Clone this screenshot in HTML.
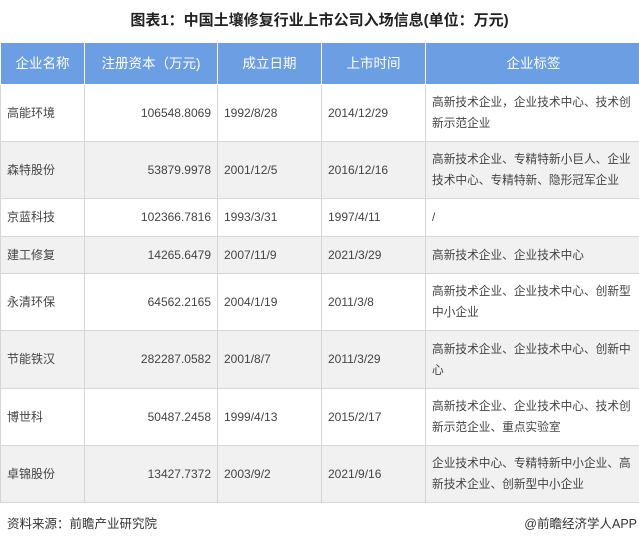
<!DOCTYPE html><html><head><meta charset="utf-8"><style>
body{margin:0;width:639px;height:543px;background:#fff;font-family:"Liberation Sans","Noto Sans CJK SC",sans-serif;position:relative;overflow:hidden}
.t{position:absolute;top:9px;left:0;width:639px;text-align:center;font-weight:bold;font-size:15px;color:#222}
table{position:absolute;top:42px;left:0;border-collapse:collapse;table-layout:fixed;width:641px}
td,th{border:1px solid #d6d6d6;font-size:12px;color:#444;padding:0 6px;line-height:21px;overflow:hidden}
td.k{font-size:11.7px;padding:0 1px 0 6px;white-space:normal}
th{background:#6b9ee2;color:#fff;font-weight:normal;font-size:13.5px;height:41px;border-color:#fff;text-align:center}
tr.g td{background:#f1f1f1}
.r{text-align:right}
.f{position:absolute;top:513px;font-size:12.5px;color:#333}
</style></head><body>
<div class="t">图表1：中国土壤修复行业上市公司入场信息(单位：万元)</div>
<table>
<colgroup><col style="width:84px"><col style="width:133px"><col style="width:104px"><col style="width:104px"><col style="width:216px"></colgroup>
<tr><th>企业名称</th><th>注册资本（万元)</th><th>成立日期</th><th>上市时间</th><th>企业标签</th></tr>
<tr style="height:57px"><td>高能环境</td><td class="r">106548.8069</td><td>1992/8/28</td><td>2014/12/29</td><td class="k">高新技术企业，企业技术中心、技术创<br>新示范企业</td></tr>
<tr class="g" style="height:57px"><td>森特股份</td><td class="r">53879.9978</td><td>2001/12/5</td><td>2016/12/16</td><td class="k">高新技术企业、专精特新小巨人、企业<br>技术中心、专精特新、隐形冠军企业</td></tr>
<tr style="height:38px"><td>京蓝科技</td><td class="r">102366.7816</td><td>1993/3/31</td><td>1997/4/11</td><td class="k">/</td></tr>
<tr class="g" style="height:37px"><td>建工修复</td><td class="r">14265.6479</td><td>2007/11/9</td><td>2021/3/29</td><td class="k">高新技术企业、企业技术中心</td></tr>
<tr style="height:57px"><td>永清环保</td><td class="r">64562.2165</td><td>2004/1/19</td><td>2011/3/8</td><td class="k">高新技术企业、企业技术中心、创新型<br>中小企业</td></tr>
<tr class="g" style="height:58px"><td>节能铁汉</td><td class="r">282287.0582</td><td>2001/8/7</td><td>2011/3/29</td><td class="k">高新技术企业、企业技术中心、创新中<br>心</td></tr>
<tr style="height:57px"><td>博世科</td><td class="r">50487.2458</td><td>1999/4/13</td><td>2015/2/17</td><td class="k">高新技术企业、企业技术中心、技术创<br>新示范企业、重点实验室</td></tr>
<tr class="g" style="height:57px"><td>卓锦股份</td><td class="r">13427.7372</td><td>2003/9/2</td><td>2021/9/16</td><td class="k">企业技术中心、专精特新中小企业、高<br>新技术企业、创新型中小企业</td></tr>
</table>
<div class="f" style="left:7px">资料来源：前瞻产业研究院</div>
<div class="f" style="right:2px">@前瞻经济学人APP</div>
</body></html>
